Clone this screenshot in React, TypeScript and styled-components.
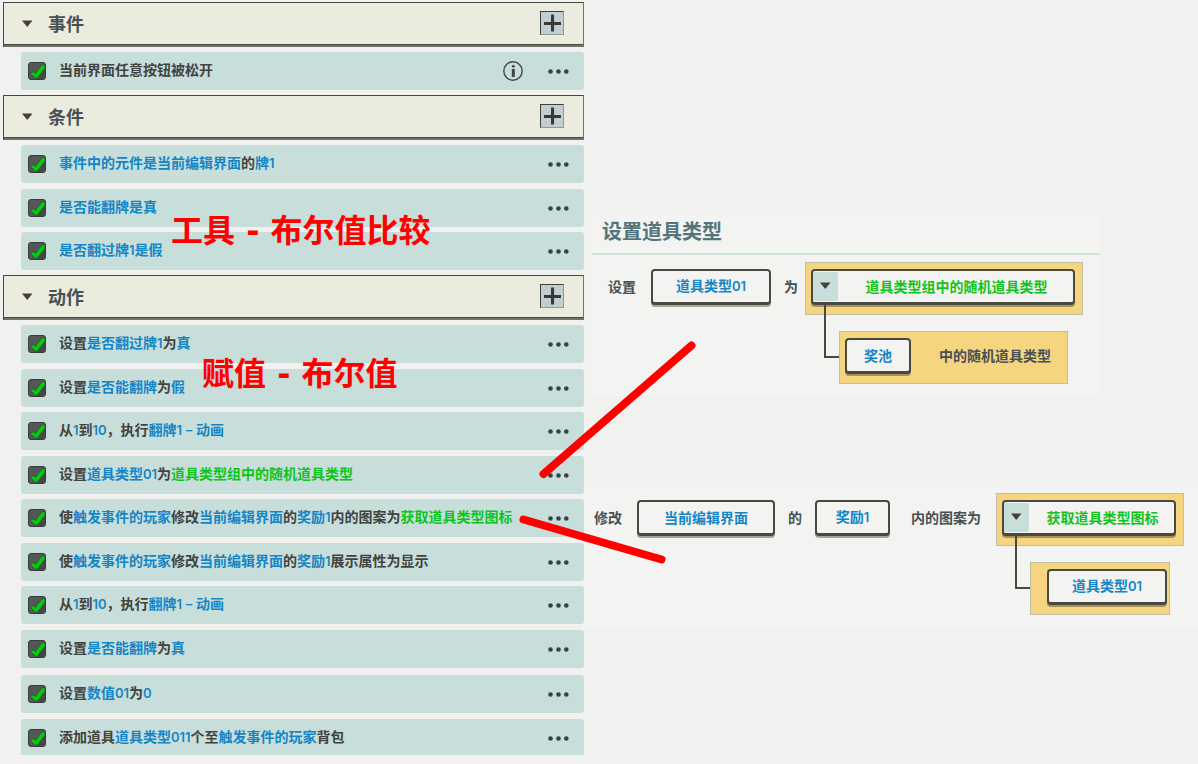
import React, { useState } from 'react';
import styled, { createGlobalStyle, css } from 'styled-components';

const GlobalStyle = createGlobalStyle`
  *, *::before, *::after { box-sizing: border-box; }
  body {
    margin: 0;
    background: #f1f1ef;
    font-family: "Noto Sans CJK SC", sans-serif;
    font-size: 14px;
    font-weight: 700;
    color: #414340;
  }
  button {
    margin: 0;
    padding: 0;
    border: 0;
    background: none;
    font: inherit;
    color: inherit;
    cursor: pointer;
  }
`;

type Tone = 'plain' | 'ref' | 'func';
type Piece = [string, Tone?];

const toneColors: Record<Tone, string> = {
  plain: '#414340',
  ref: '#1585c5',
  func: '#0fc31c',
};

const Page = styled.main`
  position: relative;
  display: grid;
  grid-template-columns: minmax(0, 584fr) minmax(0, 614fr);
  min-height: 100vh;
  overflow: hidden;
`;

const Script = styled.div`
  display: flex;
  flex-direction: column;
  gap: 5px;
  padding: 2px 0 8px 3px;
`;

const Section = styled.section`
  display: flex;
  flex-direction: column;
  gap: 5px;
`;

const SectionHeader = styled.header`
  display: flex;
  align-items: center;
  justify-content: space-between;
  height: 45px;
  padding: 0 19px 4px 0;
  border: 1px solid #474741;
  border-right-color: #73736d;
  border-bottom: 0;
  background: #ebecde;
  box-shadow: inset 0 -2px 0 #73736d, inset 0 -3px 0 #474741;
`;

const SectionTitle = styled.span`
  font-size: 18px;
  line-height: 24px;
  color: #475054;
`;

const SectionHeading = styled.h2`
  margin: 0;
  font-size: 18px;
  line-height: 24px;
`;

const FoldButton = styled.button`
  display: flex;
  align-items: center;
  gap: 15px;
  padding-left: 18px;
`;

const AddButton = styled.button`
  display: grid;
  place-items: center;
  width: 24px;
  height: 24px;
  border: 1px solid #3f3e38;
  border-right-color: #8c9a9c;
  border-bottom-color: #8c9a9c;
  background: #c1cfd3;
`;

const RowList = styled.ul`
  display: flex;
  flex-direction: column;
  margin: 0 0 0 18px;
  padding: 0;
  list-style: none;
`;

const Row = styled.li<{ $short?: boolean }>`
  display: flex;
  align-items: flex-start;
  height: ${(p) => (p.$short ? 36 : 38)}px;
  margin-bottom: 6px;
  padding: 0 15px 0 7px;
  border-radius: ${(p) => (p.$short ? '3px 3px 0 0' : '3px')};
  background: #c8deda;

  &:nth-child(even) { margin-bottom: 5px; }
  &:nth-child(8n) { margin-bottom: 7px; }
  &:last-child { margin-bottom: 0; }
`;

const CheckLabel = styled.label`
  display: flex;
  flex: 1;
  min-width: 0;
  gap: 13px;
  cursor: pointer;
`;

const CheckBox = styled.span`
  display: grid;
  flex: none;
  width: 18px;
  height: 18px;
  margin-top: 10px;

  > * { grid-area: 1 / 1; }
  input:not(:checked) + svg { visibility: hidden; }
`;

const CheckInput = styled.input`
  appearance: none;
  width: 18px;
  height: 18px;
  margin: 0;
  border: 1px solid #3a3b3b;
  border-radius: 3px;
  background: #555656;
`;

const Mark = styled.svg`
  display: block;
  position: relative;
  pointer-events: none;
`;

const RowText = styled.span`
  line-height: 34px;
  white-space: nowrap;
`;

const Word = styled.span<{ $tone: Tone }>`
  color: ${(p) => toneColors[p.$tone]};
`;

const Digits = styled.span`
  font-family: Inter, "Noto Sans CJK SC", sans-serif;
  font-size: 13px;
  font-weight: 600;
`;

const RowTools = styled.span`
  display: flex;
  align-items: center;
  gap: 25px;
  height: 38px;
`;

const ToolButton = styled.button`
  display: block;
`;

const Details = styled.div`
  display: flex;
  flex-direction: column;
  gap: 90px;
  padding-top: 214px;
`;

const Card = styled.section<{ $wide?: boolean }>`
  margin-left: ${(p) => (p.$wide ? 0 : 8)}px;
  margin-right: ${(p) => (p.$wide ? 0 : 98)}px;
  padding-bottom: 12px;
  background: #f3f3f1;
`;

const CardTitle = styled.h2`
  margin: 0;
  padding: 0 0 5px 10px;
  border-bottom: 2px solid #cfe2d6;
  font-size: 20px;
  line-height: 34px;
  color: #52747a;
`;

const Formula = styled.div<{ $inset: number }>`
  display: flex;
  align-items: flex-start;
  padding: 7px 0 0 ${(p) => p.$inset}px;
  white-space: nowrap;
`;

const FormulaText = styled.span<{ $before?: number; $after?: number }>`
  margin: 7px ${(p) => p.$after ?? 0}px 0 ${(p) => p.$before ?? 0}px;
  line-height: 34px;
  color: #475054;
`;

const keyFrame = css`
  height: 36px;
  border: 2px solid #4a483f;
  border-bottom-width: 3px;
  border-radius: 4px;
  background: #f3f3f1;
  box-shadow: 0 2px 0 rgba(70, 65, 45, 0.45);
`;

const Key = styled.button<{ $width: number; $outside?: boolean }>`
  ${keyFrame}
  flex: none;
  width: ${(p) => p.$width}px;
  margin-top: ${(p) => (p.$outside ? 7 : 0)}px;
  padding-bottom: 2px;
  line-height: 28px;
  color: ${toneColors.ref};
`;

const Picker = styled.div<{ $width: number }>`
  ${keyFrame}
  display: flex;
  width: ${(p) => p.$width}px;
`;

const PickerFold = styled.button`
  display: grid;
  place-items: center;
  flex: none;
  width: 25px;
  height: 29px;
  margin-top: 1px;
  padding-bottom: 3px;
  border-radius: 2px;
  background: #c8deda;
`;

const PickerValue = styled.button`
  flex: 1;
  padding: 0 0 2px 2px;
  color: ${toneColors.func};
`;

const Tree = styled.div`
  display: flex;
  flex-direction: column;
  align-items: flex-start;
  gap: 16px;
`;

const Tray = styled.div<{ $start?: number; $end?: number }>`
  display: flex;
  height: 53px;
  padding: 6px ${(p) => p.$end ?? 7}px 0 ${(p) => p.$start ?? 5}px;
  border: 1px solid #c3bda6;
  background: #f5d57f;
`;

const Branch = styled(Tray)`
  position: relative;
  margin-left: 34px;

  &::before {
    content: "";
    position: absolute;
    left: -16px;
    top: -27px;
    width: 15px;
    height: 53px;
    border-left: 2px solid #4a483f;
    border-bottom: 2px solid #4a483f;
  }
`;

const TrayText = styled.span`
  margin-left: 28px;
  line-height: 34px;
  color: #475054;
`;

const Note = styled.p<{ $x: number; $y: number }>`
  position: absolute;
  left: ${(p) => p.$x}px;
  top: ${(p) => p.$y}px;
  margin: 0;
  font-family: "DejaVu Sans", "Noto Sans CJK SC", sans-serif;
  font-size: 32px;
  line-height: 40px;
  white-space: nowrap;
  color: #ff0000;
  pointer-events: none;
`;

const Strokes = styled.svg`
  position: absolute;
  left: 0;
  top: 0;
  pointer-events: none;
`;

const Caret = () => (
  <Mark width="11" height="7" viewBox="0 0 11 7" aria-hidden="true">
    <path d="M0 0.5h10.5L5.25 7z" fill="#474038" />
  </Mark>
);

const PlusMark = () => (
  <Mark width="18" height="18" viewBox="0 0 18 18" aria-hidden="true">
    <path d="M11 2v14" stroke="#a4b3b6" />
    <path d="M9.5 0.5v17M1 9.5h17" stroke="#3b3932" strokeWidth="3" />
  </Mark>
);

const TickMark = () => (
  <Mark width="18" height="18" viewBox="0 0 18 18" aria-hidden="true">
    <path d="M17 7v7L14.5 17H9z" fill="#454646" />
    <path
      d="M2 11.2L5.6 9.6 7.4 11.4 13.2 3.6 17 2v4.2L9.4 16.2H7.2z"
      fill="#08c814"
      stroke="#27502b"
      strokeWidth="0.8"
      strokeLinejoin="round"
    />
  </Mark>
);

const DotsMark = () => (
  <Mark width="21" height="5" viewBox="0 0 21 5" aria-hidden="true">
    <g fill="#374144">
      <circle cx="2.5" cy="2.5" r="2.3" />
      <circle cx="10.5" cy="2.5" r="2.3" />
      <circle cx="18.3" cy="2.5" r="2.3" />
    </g>
  </Mark>
);

const InfoMark = () => (
  <Mark width="20" height="20" viewBox="0 0 20 20" aria-hidden="true">
    <circle cx="10" cy="10" r="9.2" fill="none" stroke="#40484a" strokeWidth="1.4" />
    <circle cx="10.3" cy="5.3" r="1.4" fill="#40413c" />
    <path d="M8.8 8h3v8h-3z" fill="#40413c" />
  </Mark>
);

/* Digits are set in a narrower face than the Chinese text around them. */
function Label({ text }: { text: string }) {
  return (
    <>
      {text.split(/(\d+)/).map((part, i) =>
        /^\d/.test(part) ? <Digits key={i}>{part}</Digits> : part,
      )}
    </>
  );
}

interface Entry {
  pieces: Piece[];
  info?: boolean;
  short?: boolean;
}

const sections: { title: string; entries: Entry[] }[] = [
  {
    title: '事件',
    entries: [{ pieces: [['当前界面任意按钮被松开']], info: true }],
  },
  {
    title: '条件',
    entries: [
      { pieces: [['事件中的元件是当前编辑界面', 'ref'], ['的'], ['牌1', 'ref']] },
      { pieces: [['是否能翻牌是真', 'ref']] },
      { pieces: [['是否翻过牌1是假', 'ref']] },
    ],
  },
  {
    title: '动作',
    entries: [
      { pieces: [['设置'], ['是否翻过牌1', 'ref'], ['为'], ['真', 'ref']] },
      { pieces: [['设置'], ['是否能翻牌', 'ref'], ['为'], ['假', 'ref']] },
      { pieces: [['从'], ['1', 'ref'], ['到'], ['10', 'ref'], ['，执行'], ['翻牌1 – 动画', 'ref']] },
      { pieces: [['设置'], ['道具类型01', 'ref'], ['为'], ['道具类型组中的随机道具类型', 'func']] },
      {
        pieces: [
          ['使'], ['触发事件的玩家', 'ref'], ['修改'], ['当前编辑界面', 'ref'], ['的'],
          ['奖励1', 'ref'], ['内的图案为'], ['获取道具类型图标', 'func'],
        ],
      },
      {
        pieces: [
          ['使'], ['触发事件的玩家', 'ref'], ['修改'], ['当前编辑界面', 'ref'], ['的'],
          ['奖励1', 'ref'], ['展示属性为显示'],
        ],
      },
      { pieces: [['从'], ['1', 'ref'], ['到'], ['10', 'ref'], ['，执行'], ['翻牌1 – 动画', 'ref']] },
      { pieces: [['设置'], ['是否能翻牌', 'ref'], ['为'], ['真', 'ref']] },
      { pieces: [['设置'], ['数值01', 'ref'], ['为'], ['0', 'ref']] },
      {
        pieces: [['添加道具'], ['道具类型011', 'ref'], ['个至'], ['触发事件的玩家', 'ref'], ['背包']],
        short: true,
      },
    ],
  },
];

function EntryRow({ entry }: { entry: Entry }) {
  return (
    <Row $short={entry.short}>
      <CheckLabel>
        <CheckBox>
          <CheckInput type="checkbox" defaultChecked />
          <TickMark />
        </CheckBox>
        <RowText>
          {entry.pieces.map(([text, tone = 'plain'], i) => (
            <Word key={i} $tone={tone}><Label text={text} /></Word>
          ))}
        </RowText>
      </CheckLabel>
      <RowTools>
        {entry.info && <ToolButton type="button" aria-label="说明"><InfoMark /></ToolButton>}
        <ToolButton type="button" aria-label="更多"><DotsMark /></ToolButton>
      </RowTools>
    </Row>
  );
}

function ScriptSection({ title, entries }: { title: string; entries: Entry[] }) {
  const [open, setOpen] = useState(true);
  return (
    <Section>
      <SectionHeader>
        <SectionHeading>
          <FoldButton type="button" aria-expanded={open} onClick={() => setOpen(!open)}>
            <Caret />
            <SectionTitle>{title}</SectionTitle>
          </FoldButton>
        </SectionHeading>
        <AddButton type="button" aria-label={`添加${title}`}><PlusMark /></AddButton>
      </SectionHeader>
      {open && (
        <RowList>
          {entries.map((entry, i) => <EntryRow key={i} entry={entry} />)}
        </RowList>
      )}
    </Section>
  );
}

function FunctionPicker({ width, children }: { width: number; children: React.ReactNode }) {
  return (
    <Picker $width={width}>
      <PickerFold type="button" aria-label="展开"><Caret /></PickerFold>
      <PickerValue type="button">{children}</PickerValue>
    </Picker>
  );
}

export default function App() {
  return (
    <>
      <GlobalStyle />
      <Page>
        <Script>
          {sections.map((s) => <ScriptSection key={s.title} {...s} />)}
        </Script>
        <Details>
          <Card>
            <CardTitle>设置道具类型</CardTitle>
            <Formula $inset={16}>
              <FormulaText $after={15}>设置</FormulaText>
              <Key type="button" $width={120} $outside><Label text="道具类型01" /></Key>
              <FormulaText $before={13} $after={7}>为</FormulaText>
              <Tree>
                <Tray>
                  <FunctionPicker width={264}>道具类型组中的随机道具类型</FunctionPicker>
                </Tray>
                <Branch $end={16}>
                  <Key type="button" $width={66}>奖池</Key>
                  <TrayText>中的随机道具类型</TrayText>
                </Branch>
              </Tree>
            </Formula>
          </Card>
          <Card $wide>
            <Formula $inset={10}>
              <FormulaText $after={15}>修改</FormulaText>
              <Key type="button" $width={138} $outside>当前编辑界面</Key>
              <FormulaText $before={13} $after={13}>的</FormulaText>
              <Key type="button" $width={75} $outside><Label text="奖励1" /></Key>
              <FormulaText $before={21} $after={15}>内的图案为</FormulaText>
              <Tree>
                <Tray>
                  <FunctionPicker width={174}>获取道具类型图标</FunctionPicker>
                </Tray>
                <Branch $start={16} $end={2}>
                  <Key type="button" $width={120}><Label text="道具类型01" /></Key>
                </Branch>
              </Tree>
            </Formula>
          </Card>
        </Details>
        <Note $x={171} $y={211}>工具 - 布尔值比较</Note>
        <Note $x={202} $y={354}>赋值 - 布尔值</Note>
        <Strokes width="700" height="570" viewBox="0 0 700 570" aria-hidden="true">
          <path d="M543.5 474L691.5 345.5M523.5 519.5L661.5 559.5" stroke="#ff0000" strokeWidth="8" strokeLinecap="round" />
        </Strokes>
      </Page>
    </>
  );
}
